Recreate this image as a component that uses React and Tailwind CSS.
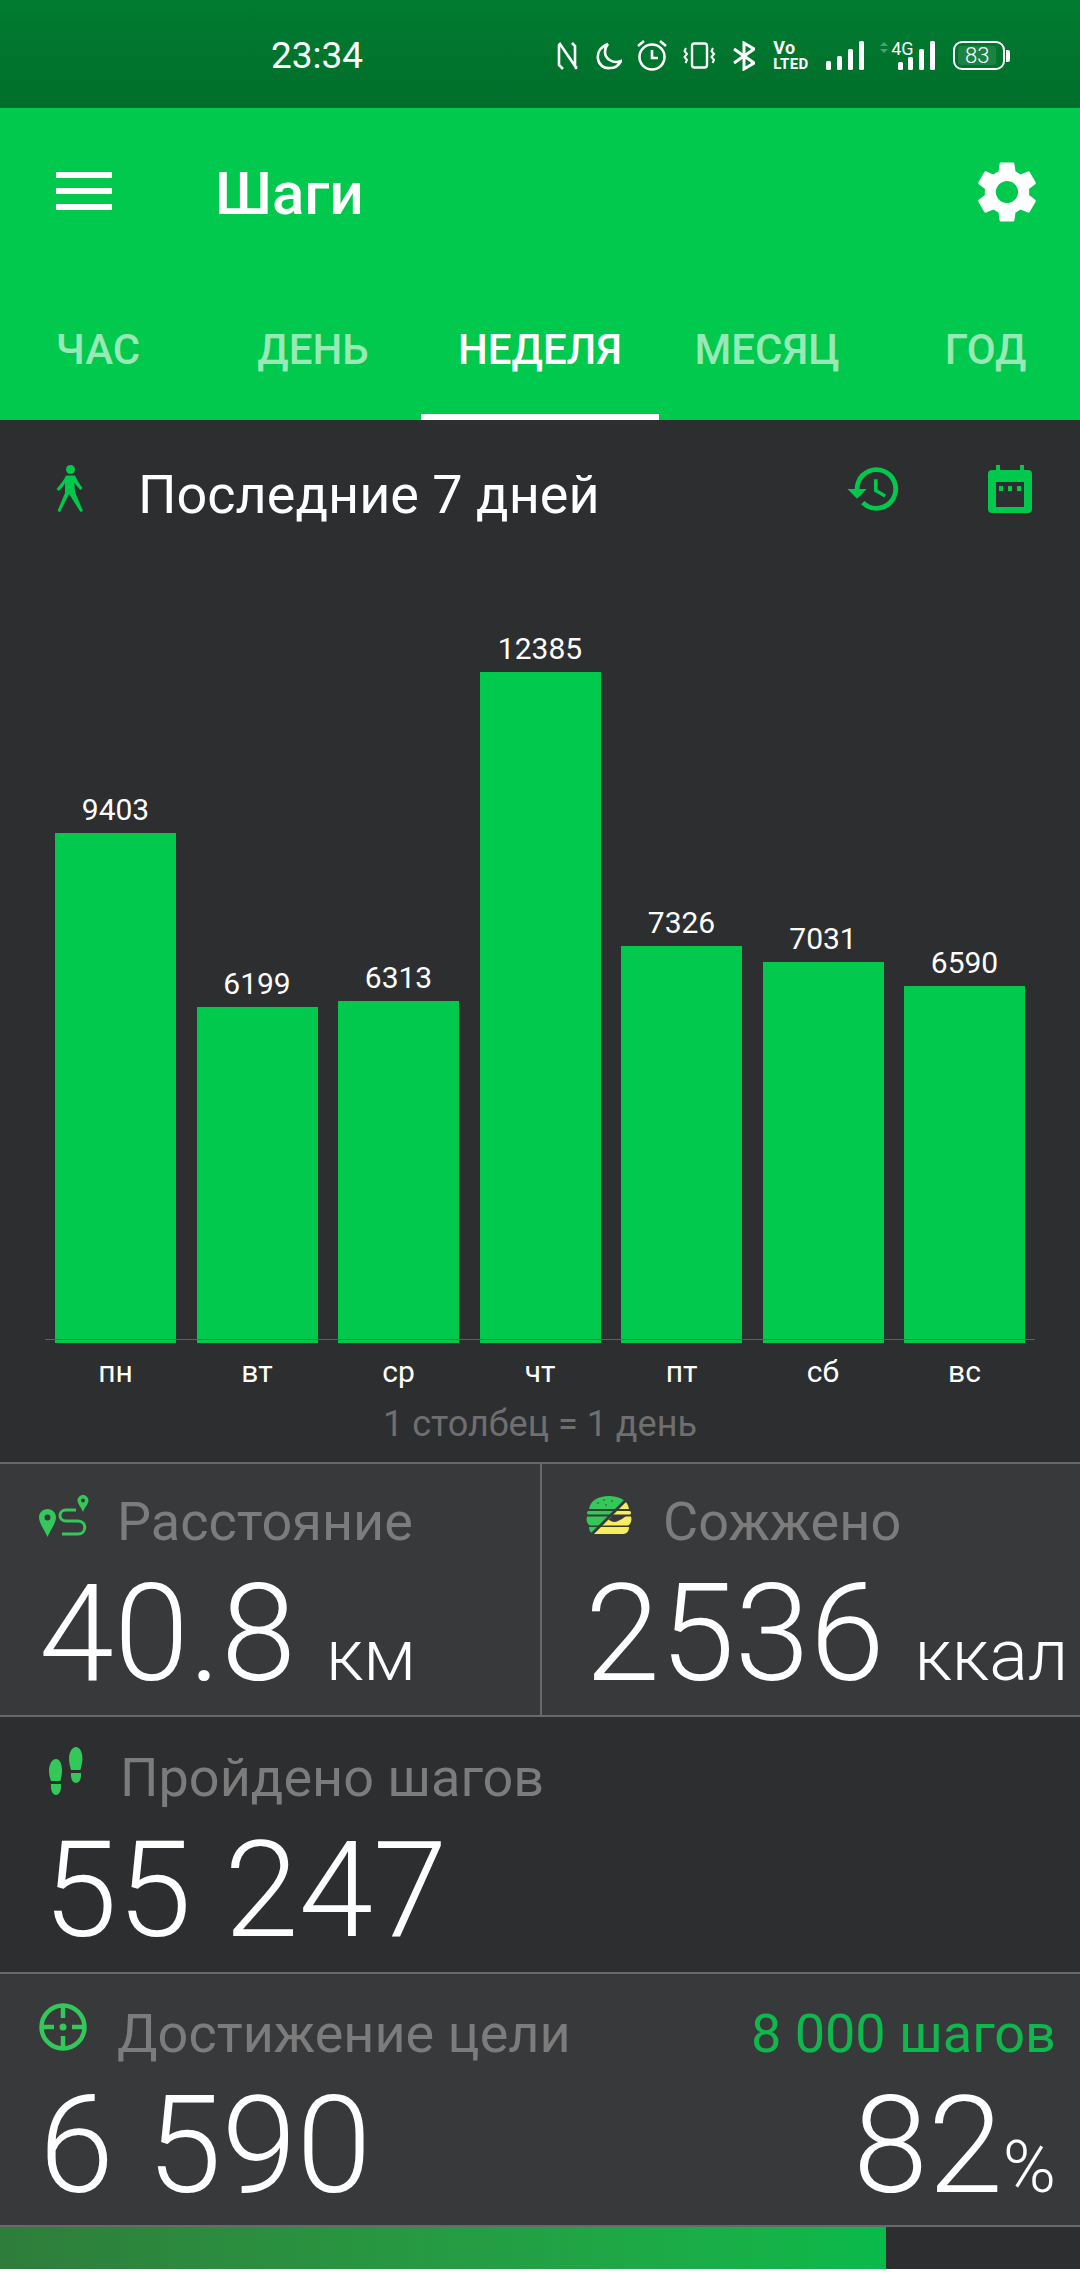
import { MdSettings, MdHistory } from "react-icons/md";

const days = [
  { day: "пн", steps: 9403 },
  { day: "вт", steps: 6199 },
  { day: "ср", steps: 6313 },
  { day: "чт", steps: 12385 },
  { day: "пт", steps: 7326 },
  { day: "сб", steps: 7031 },
  { day: "вс", steps: 6590 },
];

function StatusIcons() {
  return (
    <div className="ml-[194px] flex items-center text-white">
      <svg width="21" height="28" viewBox="0 0 21 28" fill="none" stroke="white" strokeWidth="2.6" className="mt-[1px]">
        <path d="M6 27 L2 23 V3 L3 2 L18 24 V4 L15 1" />
        <path d="M19 27V24" />
      </svg>
      <svg width="26" height="28" viewBox="0 0 26 28" fill="none" stroke="white" strokeWidth="2.6" className="ml-[18px] mt-[1px]">
        <path d="M12 2 C4 5 1 11 2 17 C3 23 8 27 14 26 C19 26 23 23 25 19 C17 22 9 17 9 10 C9 7 10 4 12 2 Z" />
      </svg>
      <svg width="30" height="31" viewBox="0 0 30 31" fill="none" stroke="white" strokeWidth="2.6" className="ml-[15px]">
        <circle cx="15" cy="17" r="12.5" />
        <path d="M15 10 V18 H21" />
        <path d="M1 6 L7 1 M29 6 L23 1" />
      </svg>
      <svg width="33" height="27" viewBox="0 0 33 27" fill="none" stroke="white" strokeWidth="2.4" className="ml-[16px]">
        <rect x="9" y="1.5" width="15" height="24" rx="2.5" />
        <path d="M3 6 L1.5 9 L4 12 L1.5 15 L4 18 L2.5 21" strokeWidth="2" />
        <path d="M30 6 L28.5 9 L31 12 L28.5 15 L31 18 L29.5 21" strokeWidth="2" />
      </svg>
      <svg width="22" height="30" viewBox="0 0 22 30" fill="none" stroke="white" strokeWidth="3" className="ml-[17px]">
        <path d="M1 8 L21 22 L11 28 V2 L21 8 L1 22" />
      </svg>
      <div className="ml-[18px] flex w-[35px] flex-col whitespace-nowrap font-['Roboto',sans-serif] font-bold leading-[14px] text-white">
        <span className="text-[18px] tracking-[0.5px]">Vo</span>
        <span className="mt-[2px] text-[15px] tracking-[0.4px]">LTED</span>
      </div>
      <svg width="38" height="29" viewBox="0 0 38 29" fill="white" className="ml-[18px]">
        <rect x="0" y="20" width="5" height="9" rx="1.5" />
        <rect x="11" y="15" width="5" height="14" rx="1.5" />
        <rect x="22" y="8" width="5" height="21" rx="1.5" />
        <rect x="33" y="0" width="5" height="29" rx="1.5" />
      </svg>
      <div className="relative ml-[15px] h-[29px] w-[57px]">
        <svg width="57" height="29" viewBox="0 0 57 29" fill="white" className="absolute left-0 top-0">
          <path d="M1 5 L5 1 L9 5 Z M1 8 L5 12 L9 8 Z" opacity="0.3" />
          <rect x="19" y="21" width="5" height="8" rx="1.5" />
          <rect x="29" y="16" width="5" height="13" rx="1.5" />
          <rect x="40" y="8" width="5" height="21" rx="1.5" />
          <rect x="51" y="0" width="5" height="29" rx="1.5" />
        </svg>
        <span className="absolute left-[12px] top-[-1px] font-['Roboto',sans-serif] text-[18px] leading-[18px] text-white">4G</span>
      </div>
      <div className="ml-[17px] flex items-center">
        <div className="flex h-[29px] w-[52px] items-center rounded-[9px] border-[2.5px] border-white p-[3px]">
          <div className="flex h-full w-[38px] items-center justify-center rounded-[3px] bg-white/10 font-['Roboto',sans-serif] text-[22px] font-light leading-none text-white">
            83
          </div>
        </div>
        <div className="ml-[1px] h-[12px] w-[4px] rounded-r-[2px] bg-white" />
      </div>
    </div>
  );
}

function WalkIcon() {
  return (
    <svg width="27" height="48" viewBox="0 0 27 48" fill="#00c94d">
      <circle cx="14.5" cy="4.5" r="4.5" />
      <path d="M10 10.5 H19 C21 15 23.5 19 26.5 23 L24.5 25 C22 23 20 20 18.5 17.5 C18.5 22 18.5 26 19.5 28 L27 46 L24.5 47 L15 32 L13 29 L4 47 L1.5 46 L9 28 L9 18 C7.5 21 5 24 2.5 26 L0.5 24 C4 20 8 15 10 10.5 Z" />
    </svg>
  );
}

function CalendarIcon() {
  return (
    <svg width="44" height="48" viewBox="0 0 44 48" fill="#00c94d">
      <rect x="8" y="0" width="4" height="7" />
      <rect x="32" y="0" width="4" height="7" />
      <rect x="0" y="5" width="44" height="43" rx="4" />
      <rect x="8" y="17" width="28" height="25" fill="#2d2e30" />
      <rect x="11" y="21" width="4" height="5" />
      <rect x="20" y="21" width="4" height="5" />
      <rect x="29" y="21" width="4" height="5" />
    </svg>
  );
}

function RouteIcon() {
  return (
    <svg width="50" height="42" viewBox="0 0 50 42" className="mt-[1px] shrink-0">
      <path fillRule="evenodd" fill="#34c759" d="M8.5 14 C13 14 17 17.5 17 22.5 C17 28 12 34 8.5 42 C5 34 0 28 0 22.5 C0 17.5 4 14 8.5 14 Z M8.5 19.5 A3 3 0 1 0 8.5 25.5 A3 3 0 1 0 8.5 19.5 Z" />
      <path fillRule="evenodd" fill="#34c759" d="M44 0 C47 0 49.5 2.5 49.5 5.5 C49.5 9 46 12 44 17 C42 12 38.5 9 38.5 5.5 C38.5 2.5 41 0 44 0 Z M44 3.5 A2 2 0 1 0 44 7.5 A2 2 0 1 0 44 3.5 Z" />
      <path fill="none" stroke="#34c759" strokeWidth="3" d="M37 15 H27 C19 15 19 26 27 26 H39 C48 26 48 39 39 39 H23" />
    </svg>
  );
}

function BurgerParts({ fill, wave }) {
  return (
    <g fill={fill}>
      <path d="M3 13 C4 5 12 0 23 0 C34 0 42 5 43 13 Z" />
      <rect x="1" y="15" width="44" height="3.5" rx="1.5" />
      <path d="M1 20.5 H45 C46 24 45 28 42 29.5 H4 C1 28 0 24 1 20.5 Z" />
      <path d="M3 31 H43 C43 35 41 38 37 38 H9 C5 38 3 35 3 31 Z" />
      {wave && <path fill="#38393b" d="M14 20 H40 L36 23 C33 24 31 26 28 26 C25 26 23 23 20 23 Z" />}
    </g>
  );
}

function BurgerIcon() {
  return (
    <svg width="46" height="38" viewBox="0 0 46 38" className="mt-[2px] shrink-0">
      <defs>
        <clipPath id="burger-green">
          <polygon points="0,0 42,0 0,42" />
        </clipPath>
        <clipPath id="burger-yellow">
          <polygon points="46,0 46,38 8,38" />
        </clipPath>
      </defs>
      <g clipPath="url(#burger-green)">
        <BurgerParts fill="#34c759" />
        <g fill="#1f7d3c">
          <circle cx="12" cy="7" r="0.9" />
          <circle cx="18" cy="4" r="0.9" />
          <circle cx="20" cy="9" r="0.9" />
          <circle cx="26" cy="5" r="0.9" />
        </g>
      </g>
      <g clipPath="url(#burger-yellow)">
        <BurgerParts fill="#f5ee5e" wave />
      </g>
    </svg>
  );
}

function FeetIcon() {
  return (
    <svg width="34" height="48" viewBox="0 0 34 48" fill="#34c759" className="mt-[-3px] shrink-0">
      <path d="M0 24 C0 17 3 12 7 12 C11 12 13 17 13 24 C13 28 12 31 11.5 34 H2 C1 31 0 28 0 24 Z" />
      <path d="M2 37 H12 C12.5 42 11 48 7 48 C3 48 1.5 42 2 37 Z" />
      <path d="M20 12 C20 5 23 0 27 0 C31 0 33.5 5 33.5 12 C33.5 16 32 19 31.5 23 H22 C21 19 20 16 20 12 Z" />
      <path d="M22 26 H32 C32.5 31 31 36 27 36 C23 36 21.5 31 22 26 Z" />
    </svg>
  );
}

function TargetIcon() {
  return (
    <svg width="48" height="48" viewBox="0 0 48 48" fill="none" stroke="#34c759" strokeWidth="4.5" className="mt-[-3px] shrink-0">
      <circle cx="24" cy="24" r="21.5" />
      <path d="M24 3 V15 M24 33 V45 M3 24 H15 M33 24 H45" />
      <circle cx="24" cy="24" r="3.5" fill="#34c759" stroke="none" />
    </svg>
  );
}

function Title({ icon, children }) {
  return (
    <div className="flex items-start">
      {icon}
      <div className="mt-[1px] whitespace-nowrap text-[54px] leading-[54px] text-[#7c7c7c]">{children}</div>
    </div>
  );
}

export default function App() {
  return (
    <div className="h-[2273px] w-[1080px] overflow-hidden bg-white font-['Roboto',sans-serif]">
      <div className="flex h-[108px] items-center bg-gradient-to-b from-[#007c30] to-[#006e2b] pl-[271px] pt-[3px]">
        <span className="text-[37px] leading-none text-white">23:34</span>
        <StatusIcons />
      </div>

      <div className="h-[312px] bg-[#00c94d]">
        <div className="flex h-[114px] items-start pl-[56px] pr-[36px] pt-[64px]">
          <div className="flex h-[38px] w-[56px] flex-col justify-between">
            <div className="h-[6px] bg-white" />
            <div className="h-[6px] bg-white" />
            <div className="h-[6px] bg-white" />
          </div>
          <div className="ml-[103px] mt-[-8px] text-[60px] font-medium leading-[60px] text-white">Шаги</div>
          <MdSettings className="ml-auto mt-[-17px] text-white" size={74} />
        </div>
        <div className="mt-[78px] flex h-[120px] text-[42px] font-medium text-white/60">
          <div className="w-[196px] pt-[26px] text-center leading-[48px]">ЧАС</div>
          <div className="w-[225px] pl-[9px] pt-[26px] text-center leading-[48px]">ДЕНЬ</div>
          <div className="w-[238px] border-b-[6px] border-white pt-[26px] text-center leading-[48px] text-white">НЕДЕЛЯ</div>
          <div className="w-[216px] pt-[26px] text-center leading-[48px]">МЕСЯЦ</div>
          <div className="w-[205px] pl-[16px] pt-[26px] text-center leading-[48px]">ГОД</div>
        </div>
      </div>

      <div className="flex h-[1042px] flex-col bg-[#2d2e30]">
        <div className="flex items-start pl-[56px] pt-[45px]">
          <WalkIcon />
          <div className="ml-[55px] mt-[3px] text-[54px] leading-[54px] text-white">Последние 7 дней</div>
          <MdHistory className="ml-[245px] mt-[-5px] text-[#00c94d]" size={58} />
          <div className="ml-[85px]">
            <CalendarIcon />
          </div>
        </div>

        <div className="mx-[55px] mt-[112px] grid h-[705px] grid-cols-7 items-end gap-x-[20.5px]">
          {days.map((d) => (
            <div key={d.day} className="flex flex-col items-center">
              <div className="mb-[8px] text-[30px] leading-[30px] text-white">{d.steps}</div>
              <div className="w-full bg-[#00c94d]" style={{ height: Math.round(d.steps * 0.0542) }} />
            </div>
          ))}
        </div>
        <div className="mx-[45px] h-[1px] bg-[#5f6062]" />
        <div className="mx-[55px] mt-[17px] grid grid-cols-7 gap-x-[20.5px]">
          {days.map((d) => (
            <div key={d.day} className="text-center text-[30px] leading-[30px] text-white">
              {d.day}
            </div>
          ))}
        </div>
        <div className="mt-[19px] text-center text-[36px] leading-[36px] text-[#6f6f6f]">1 столбец = 1 день</div>
      </div>

      <div className="flex h-[255px] border-y-[2px] border-[#68696b] bg-[#38393b]">
        <div className="h-full w-[542px] border-r-[2px] border-[#68696b] pl-[39px] pt-[30px]">
          <Title icon={<RouteIcon />}>
            <span className="ml-[28px]">Расстояние</span>
          </Title>
          <div className="mt-[18px] flex items-baseline font-light text-white">
            <span className="text-[135px] leading-[135px]">40.8</span>
            <span className="ml-[30px] text-[72px] leading-[72px]">км</span>
          </div>
        </div>
        <div className="h-full flex-1 pl-[44px] pt-[30px]">
          <Title icon={<BurgerIcon />}>
            <span className="ml-[31px]">Сожжено</span>
          </Title>
          <div className="ml-[-1px] mt-[18px] flex items-baseline font-light text-white">
            <span className="text-[135px] leading-[135px]">2536</span>
            <span className="ml-[30px] text-[72px] leading-[72px]">ккал</span>
          </div>
        </div>
      </div>

      <div className="h-[257px] border-b-[2px] border-[#68696b] bg-[#2d2e30] pl-[49px] pt-[33px]">
        <Title icon={<FeetIcon />}>
          <span className="ml-[37px]">Пройдено шагов</span>
        </Title>
        <div className="ml-[-6px] mt-[18px] text-[134px] font-light leading-[135px] text-white">55 247</div>
      </div>

      <div className="h-[253px] border-b-[2px] border-[#68696b] bg-[#38393b] pl-[39px] pr-[24px] pt-[32px]">
        <div className="flex items-start justify-between">
          <Title icon={<TargetIcon />}>
            <span className="ml-[30px]">Достижение цели</span>
          </Title>
          <div className="mt-[1px] text-[54px] leading-[54px] text-[#0fb84d]">8 000 шагов</div>
        </div>
        <div className="mt-[18px] flex items-baseline justify-between font-light text-white">
          <span className="text-[135px] leading-[135px]">6 590</span>
          <span className="text-[135px] leading-[135px]">
            82<span className="text-[72px] leading-[72px]">%</span>
          </span>
        </div>
      </div>

      <div className="h-[42px] bg-[#2d2e30]">
        <div className="h-full w-[886px] bg-gradient-to-r from-[#2e7d3a] to-[#08ba4a]" />
      </div>
    </div>
  );
}
